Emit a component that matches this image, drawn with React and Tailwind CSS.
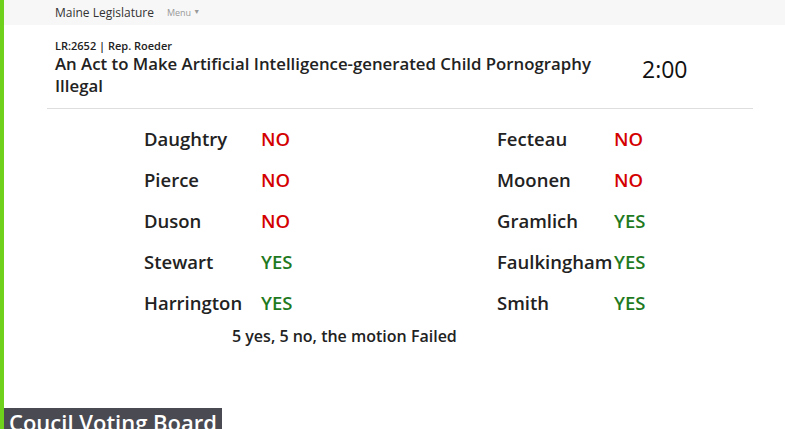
import React from "react";

const left = [
  ["Daughtry", "NO"],
  ["Pierce", "NO"],
  ["Duson", "NO"],
  ["Stewart", "YES"],
  ["Harrington", "YES"],
];
const right = [
  ["Fecteau", "NO"],
  ["Moonen", "NO"],
  ["Gramlich", "YES"],
  ["Faulkingham", "YES"],
  ["Smith", "YES"],
];

function Col({ rows }) {
  return (
    <div className="flex flex-col w-[353px] shrink-0">
      {rows.map(([n, v]) => (
        <div key={n} className="flex items-center h-[41px] text-[18.5px] font-semibold">
          <span className="w-[117px] shrink-0 text-[#222]">{n}</span>
          <span className={v === "NO" ? "text-[#d40000]" : "text-[#1f7a1f]"}>{v}</span>
        </div>
      ))}
    </div>
  );
}

export default function App() {
  return (
    <div
      className="w-[785px] h-[429px] overflow-hidden bg-white flex flex-col border-l-4 border-[#6fd11b] relative"
      style={{ fontFamily: '"Open Sans", "Noto Sans", sans-serif' }}
    >
      <div className="h-[25px] shrink-0 bg-[#f7f7f7] flex items-center pl-[51px] gap-[13px]">
        <span className="text-[12px] text-[#333]">Maine Legislature</span>
        <span className="text-[9px] text-[#999] flex items-center gap-[2px]">
          Menu
          <span className="text-[7px]">▼</span>
        </span>
      </div>
      <div className="ml-[43px] w-[706px] flex flex-col">
        <div className="flex items-start pt-[13px] pb-[11px] px-[8px] border-b border-[#dedede]">
          <div className="w-[545px] shrink-0 flex flex-col">
            <div className="text-[11px] font-semibold text-[#222] leading-[15px]">LR:2652 | Rep. Roeder</div>
            <div className="text-[16.8px] font-semibold text-[#222] leading-[22px]">
              An Act to Make Artificial Intelligence-generated Child Pornography Illegal
            </div>
          </div>
          <div className="ml-[42px] mt-[17px] text-[23px] text-[#111] leading-[28px]">2:00</div>
        </div>
        <div className="flex pl-[97px] pt-[9px]">
          <Col rows={left} />
          <Col rows={right} />
        </div>
        <div className="pl-[185px] pt-[1px] text-[16px] font-semibold text-[#222]">
          5 yes, 5 no, the motion Failed
        </div>
      </div>
      <div className="absolute left-0 top-[408px] bg-[#4a4a52] text-white text-[22px] font-semibold pl-[5px] pr-[5px] leading-[28px]">
        Coucil Voting Board
      </div>
    </div>
  );
}
